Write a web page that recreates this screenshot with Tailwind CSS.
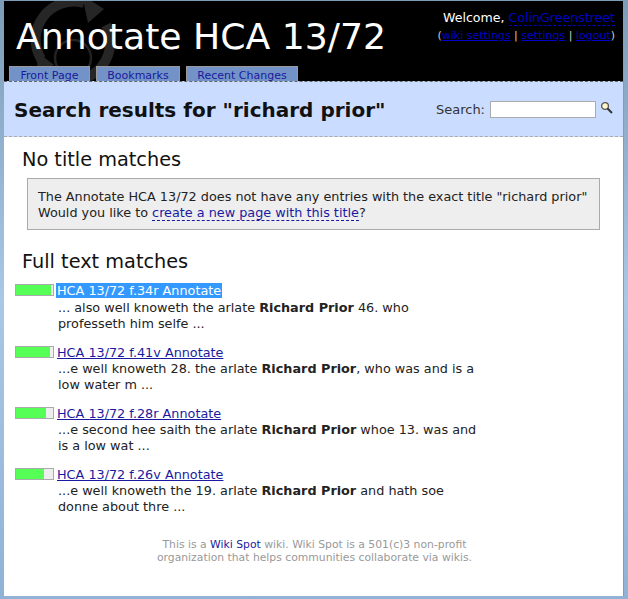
<!DOCTYPE html>
<html lang="en">
<head>
    <meta charset="UTF-8">
    <title>Annotate HCA 13/72</title>
    <script src="https://cdn.jsdelivr.net/npm/@tailwindcss/browser@4"></script>
</head>
<body class="w-[628px] h-[599px] overflow-hidden bg-gradient-to-b from-[#7d9cb8] via-[#a9c8e6] to-[#8fb2d6] font-['DejaVu_Sans',sans-serif] text-[12.8px] leading-[16px] text-[#222]">
    <div class="ml-[4px] mt-[1px] w-[620px] h-[595px] bg-white border-r border-[#8a9bb0] flex flex-col relative">
        <!-- header -->
        <div class="h-[80px] bg-black relative overflow-hidden flex justify-between">
            <svg class="absolute left-0 top-0" width="140" height="80" viewBox="0 0 140 80" fill="none">
                <path d="M37 58 A38 38 0 0 1 80 2" stroke="#262626" stroke-width="10"/>
                <path d="M102 24 A38 38 0 0 1 84 76" stroke="#262626" stroke-width="10"/>
                <path d="M78 -6 L100 8 L84 22 Z" fill="#262626"/>
                <path d="M32 50 L50 64 L34 72 Z" fill="#262626"/>
                <circle cx="69" cy="57" r="18" stroke="#222" stroke-width="2.5"/>
            </svg>
            <div class="relative flex flex-col justify-between pl-[5px]">
                <div class="pl-[7px] pt-[13px] text-[36.2px] leading-[46px] text-white">Annotate HCA 13/72</div>
                <div class="flex gap-[6px]">
                    <a class="h-[15px] w-[81px] text-center bg-[#7393c8] border-t border-x border-[#9a9a9a] text-[11px] leading-[17px] text-[#1a1a9c]">Front Page</a>
                    <a class="h-[15px] w-[84px] text-center bg-[#7393c8] border-t border-x border-[#9a9a9a] text-[11px] leading-[17px] text-[#1a1a9c]">Bookmarks</a>
                    <a class="h-[15px] w-[112px] text-center bg-[#7393c8] border-t border-x border-[#9a9a9a] text-[11px] leading-[17px] text-[#1a1a9c]">Recent Changes</a>
                </div>
            </div>
            <div class="relative pr-[8px] pt-[8px] text-right leading-[18px] text-white">
                <div class="text-[12.6px]">Welcome, <a class="text-[#0000c8] border-b border-dashed border-[#0000c8]">ColinGreenstreet</a></div>
                <div class="text-[11px] text-[#ccc]">(<a class="text-[#0000c8] underline">wiki settings</a> | <a class="text-[#0000c8] underline">settings</a> | <a class="text-[#0000c8] underline">logout</a>)</div>
            </div>
        </div>
        <!-- title bar -->
        <div class="h-[56px] bg-[#cadcff] border-t border-[#666] border-b border-b-[#aaa] border-dashed flex items-center justify-between pl-[10px] pr-[10px]">
            <h1 class="pt-[2px] text-[20px] font-bold text-[#111]">Search results for "richard prior"</h1>
            <div class="flex items-center text-[13px] text-[#333]">
                <span class="pt-[2px]">Search:</span>
                <input class="ml-[5px] w-[106px] h-[17px] bg-white border border-[#aaa]" type="text">
                <svg class="ml-[4px] mb-[4px]" width="13" height="13" viewBox="0 0 13 13" fill="none">
                    <circle cx="5" cy="5" r="3.4" fill="#fff6c8" stroke="#555" stroke-width="1.3"/>
                    <path d="M7.5 7.5 L12 12" stroke="#333" stroke-width="2"/>
                </svg>
            </div>
        </div>
        <!-- content -->
        <div class="flex-1 flex flex-col">
            <h2 class="ml-[18px] mt-[11px] text-[19.3px] leading-[24px] text-[#111]">No title matches</h2>
            <div class="ml-[23px] mt-[6px] w-[573px] h-[52px] bg-[#eee] border border-[#aaa] pl-[10px] pt-[10px]">
                The Annotate HCA 13/72 does not have any entries with the exact title "richard prior"<br>
                Would you like to <a class="text-[#1a1aa0] border-b border-dashed border-[#1a1aa0]">create a new page with this title</a>?
            </div>
            <h2 class="ml-[18px] mt-[20px] text-[19.3px] leading-[24px] text-[#111]">Full text matches</h2>
            <div class="mt-[9px] w-[478px] flex flex-col gap-[13px]">
                <div class="flex pl-[11px] h-[48px]">
                    <div class="mt-[1px] w-[39px] h-[12px] bg-[#eee] border border-[#aaa] shrink-0"><div class="h-full w-[35px] bg-[#55ff55]"></div></div>
                    <div class="ml-[2px]">
                        <a class="px-px bg-[#3399ff] text-white">HCA 13/72 f.34r Annotate</a>
                        <p class="ml-[2px] mt-px">... also well knoweth the arlate <b>Richard Prior</b> 46. who<br>professeth him selfe ...</p>
                    </div>
                </div>
                <div class="flex pl-[11px] pt-px h-[48px]">
                    <div class="mt-[1px] w-[39px] h-[12px] bg-[#eee] border border-[#aaa] shrink-0"><div class="h-full w-[34px] bg-[#55ff55]"></div></div>
                    <div class="ml-[2px]">
                        <a class="px-px text-[#1a1aa0] underline">HCA 13/72 f.41v Annotate</a>
                        <p class="ml-[2px]">...e well knoweth 28. the arlate <b>Richard Prior</b>, who was and is a<br>low water m ...</p>
                    </div>
                </div>
                <div class="flex pl-[11px] pt-px h-[48px]">
                    <div class="mt-[1px] w-[39px] h-[12px] bg-[#eee] border border-[#aaa] shrink-0"><div class="h-full w-[30px] bg-[#55ff55]"></div></div>
                    <div class="ml-[2px]">
                        <a class="px-px text-[#1a1aa0] underline">HCA 13/72 f.28r Annotate</a>
                        <p class="ml-[2px]">...e second hee saith the arlate <b>Richard Prior</b> whoe 13. was and<br>is a low wat ...</p>
                    </div>
                </div>
                <div class="flex pl-[11px] pt-px h-[48px]">
                    <div class="mt-[1px] w-[39px] h-[12px] bg-[#eee] border border-[#aaa] shrink-0"><div class="h-full w-[28px] bg-[#55ff55]"></div></div>
                    <div class="ml-[2px]">
                        <a class="px-px text-[#1a1aa0] underline">HCA 13/72 f.26v Annotate</a>
                        <p class="ml-[2px]">...e well knoweth the 19. arlate <b>Richard Prior</b> and hath soe<br>donne about thre ...</p>
                    </div>
                </div>
            </div>
            <p class="mt-[24px] w-[621px] text-center text-[10.8px] leading-[13px] text-[#999]">
                This is a <a class="text-[#1a1a9c]">Wiki Spot</a> wiki. Wiki Spot is a 501(c)3 non-profit<br>
                organization that helps communities collaborate via wikis.
            </p>
        </div>
    </div>
</body>
</html>
